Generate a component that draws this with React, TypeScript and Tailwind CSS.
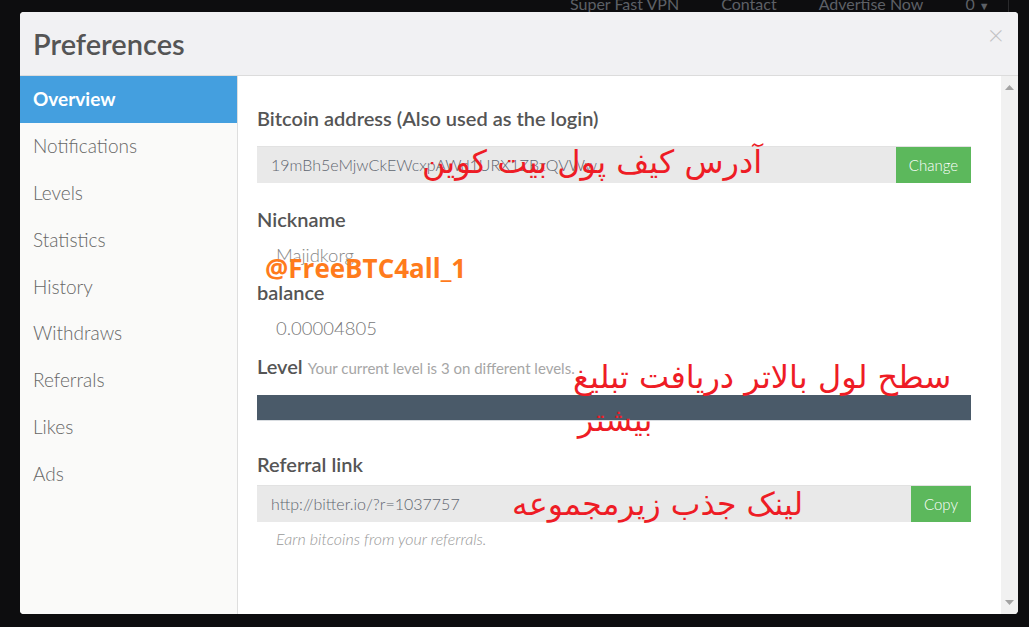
const sidebarItems = ['Notifications', 'Levels', 'Statistics', 'History', 'Withdraws', 'Referrals', 'Likes', 'Ads'];

function Field({ value, button, buttonWidth }: { value: string; button: string; buttonWidth: string }) {
    return (
        <div className="flex h-[37px] bg-[#e9e9e9] border-t border-[#e2e2e2]">
            <div className="flex-1 flex items-center pl-[14px] text-[16px] font-light text-[#5f6670] overflow-hidden whitespace-nowrap">{value}</div>
            <div className={`${buttonWidth} flex items-center justify-center bg-[#5cb85c] text-white text-[15px] font-light`}>{button}</div>
        </div>
    );
}

export default function App() {
    return (
        <div className="h-[627px] w-[1029px] bg-[#0d0d0f] overflow-hidden flex flex-col font-['Lato','Open_Sans',sans-serif]">
            <div className="h-[12px] overflow-hidden flex text-[16px] text-[#5d6066] leading-[20px]">
                <div className="-mt-[6px] flex pl-[570px] gap-[42px]">
                    <span>Super Fast VPN</span>
                    <span>Contact</span>
                    <span>Advertise Now</span>
                    <span>0 <span className="text-[11px]">▼</span></span>
                </div>
                <div className="ml-[18px] w-px bg-[#2a2a2c]"></div>
            </div>

            <div className="flex">
                <div className="ml-[20px] w-[998px] h-[602px] bg-white rounded-[4px] overflow-hidden flex flex-col">
                    <div className="h-[64px] shrink-0 bg-[#f1f1f3] border-b border-[#dcdcdc] flex items-start justify-between pl-[13px] pr-[14px]">
                        <h1 className="mt-[15px] text-[29px] font-semibold text-[#555] leading-[34px]">Preferences</h1>
                        <span className="mt-[6px] text-[28px] text-[#c2c2c4] font-light leading-[32px]">×</span>
                    </div>

                    <div className="flex flex-1 min-h-0">
                        <div className="w-[218px] shrink-0 bg-[#fafaf9] border-r border-[#dedede]">
                            <div className="h-[47px] bg-[#449fdf] flex items-center px-[13px] text-[19px] font-bold text-white">Overview</div>
                            {sidebarItems.map((item) => (
                                <div key={item} className="h-[46.8px] flex items-center px-[13px] text-[19px] font-light text-[#666]">
                                    {item}
                                </div>
                            ))}
                        </div>

                        <div className="relative flex-1 pl-[19px] pr-[30px] pt-[29px]">
                            <h2 className="text-[20px] font-semibold text-[#555] leading-[26px]">Bitcoin address (Also used as the login)</h2>
                            <div className="mt-[15px]">
                                <Field value="19mBh5eMjwCkEWcxpAWd1URX1ZBzQVWw" button="Change" buttonWidth="w-[75px]" />
                            </div>

                            <h2 className="mt-[23px] text-[20px] font-semibold text-[#555] leading-[26px]">Nickname</h2>
                            <div className="mt-[10px] pl-[19px] text-[18.5px] font-light text-[#888] leading-[26px]">Majidkorg</div>
                            <h2 className="mt-[11px] text-[20px] font-semibold text-[#555] leading-[26px]">balance</h2>
                            <div className="mt-[10px] pl-[19px] text-[18.5px] font-light text-[#777] leading-[26px]">0.00004805</div>

                            <div className="mt-[12px] flex items-baseline gap-[5px] leading-[26px]">
                                <span className="text-[20px] font-semibold text-[#555]">Level</span>
                                <span className="text-[15px] text-[#a6a6a6]">Your current level is 3 on different levels.</span>
                            </div>
                            <div className="mt-[14px] h-[26px] bg-[#4a5a69] border-b border-[#d9dde1]"></div>

                            <h2 className="mt-[30px] text-[20px] font-semibold text-[#555] leading-[26px]">Referral link</h2>
                            <div className="mt-[8px]">
                                <Field value="http://bitter.io/?r=1037757" button="Copy" buttonWidth="w-[60px]" />
                            </div>
                            <div className="mt-[6px] pl-[19px] text-[16px] italic font-light text-[#999] leading-[22px]">Earn bitcoins from your referrals.</div>

                            <div className="absolute left-[27px] top-[176px] text-[26px] font-bold text-[#ff7b1c] leading-[32px] font-['Open_Sans',sans-serif]">@FreeBTC4all_1</div>
                            <div dir="rtl" className="absolute left-[184px] top-[66px] text-[32px] text-[#ee1c25] leading-[40px] font-['DejaVu_Sans',sans-serif] whitespace-nowrap">آدرس کیف پول بیت کوین</div>
                            <div dir="rtl" className="absolute left-[335px] top-[280px] w-[400px] text-left text-[32px] text-[#ee1c25] leading-[43px] font-['DejaVu_Sans',sans-serif]">
                                <div>سطح لول بالاتر دریافت تبلیغ</div>
                                <div className="pl-[5px]">بیشتر</div>
                            </div>
                            <div dir="rtl" className="absolute left-[274px] top-[408px] text-[31.5px] text-[#ee1c25] leading-[40px] font-['DejaVu_Sans',sans-serif] whitespace-nowrap">لینک جذب زیرمجموعه</div>
                        </div>

                        <div className="w-[17px] shrink-0 bg-[#f1f1f1] flex flex-col items-center justify-between py-[9px]">
                            <svg width="9" height="5" viewBox="0 0 9 5"><path d="M0 5 L4.5 0 L9 5 Z" fill="#a3a3a3" /></svg>
                            <svg width="9" height="5" viewBox="0 0 9 5"><path d="M0 0 L4.5 5 L9 0 Z" fill="#a3a3a3" /></svg>
                        </div>
                    </div>
                </div>
            </div>
        </div>
    );
}
